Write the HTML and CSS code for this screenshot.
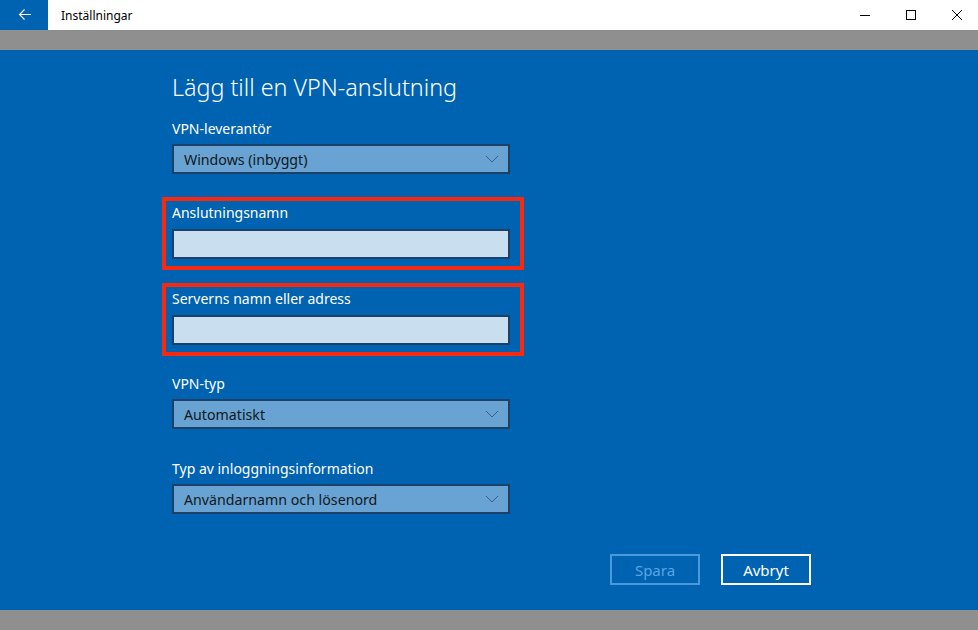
FILE: index.html
```html
<!DOCTYPE html>
<html>
<head>
  <meta charset="UTF-8">
  <title>Inställningar</title>
  <link rel="stylesheet" href="styles.css">
</head>
<body>
  <div class="titlebar">
    <div class="back">
      <svg width="48" height="30" viewBox="0 0 48 30">
        <path d="M31 14.5H19.5M24.5 9.5L19.5 14.5L24.5 19.5" fill="none" stroke="#fff" stroke-width="1.1"/>
      </svg>
    </div>
    <div class="app-title">Inställningar</div>
    <div class="controls">
      <div class="ctl">
        <svg width="12" height="12" viewBox="0 0 12 12"><path d="M1 6.5H11" stroke="#000" stroke-width="1"/></svg>
      </div>
      <div class="ctl">
        <svg width="12" height="12" viewBox="0 0 12 12"><rect x="1.5" y="1.5" width="9" height="9" fill="none" stroke="#000" stroke-width="1"/></svg>
      </div>
      <div class="ctl">
        <svg width="12" height="12" viewBox="0 0 12 12"><path d="M1 1L11 11M11 1L1 11" stroke="#000" stroke-width="1"/></svg>
      </div>
    </div>
  </div>

  <div class="band"></div>

  <div class="main">
    <div class="form">
      <h1>Lägg till en VPN-anslutning</h1>

      <div class="field">
        <label>VPN-leverantör</label>
        <div class="select">
          <span>Windows (inbyggt)</span>
          <svg width="14" height="8" viewBox="0 0 14 8"><path d="M1 1L7 7L13 1" fill="none" stroke="#3d5e80" stroke-width="1"/></svg>
        </div>
      </div>

      <div class="highlight first">
        <label>Anslutningsnamn</label>
        <div class="input"></div>
      </div>

      <div class="highlight second">
        <label>Serverns namn eller adress</label>
        <div class="input"></div>
      </div>

      <div class="field type">
        <label>VPN-typ</label>
        <div class="select">
          <span>Automatiskt</span>
          <svg width="14" height="8" viewBox="0 0 14 8"><path d="M1 1L7 7L13 1" fill="none" stroke="#3d5e80" stroke-width="1"/></svg>
        </div>
      </div>

      <div class="field login">
        <label>Typ av inloggningsinformation</label>
        <div class="select">
          <span>Användarnamn och lösenord</span>
          <svg width="14" height="8" viewBox="0 0 14 8"><path d="M1 1L7 7L13 1" fill="none" stroke="#3d5e80" stroke-width="1"/></svg>
        </div>
      </div>

      <div class="actions">
        <button class="btn disabled">Spara</button>
        <button class="btn">Avbryt</button>
      </div>
    </div>
  </div>

  <div class="band bottom"></div>
</body>
</html>
```

FILE: styles.css
```css
body {
  margin: 0;
  width: 978px;
  height: 630px;
  overflow: hidden;
  font-family: "Noto Sans", "Open Sans", sans-serif;
  background-color: #0063b1;
}
.titlebar {
  height: 30px;
  display: flex;
  align-items: center;
  background-color: #ffffff;
}
.back {
  width: 48px;
  height: 30px;
  background-color: #0063b1;
}
.back svg {
  display: block;
}
.app-title {
  margin-left: 13px;
  font-size: 12px;
  color: #000;
  flex: 1;
}
.controls {
  display: flex;
  margin-right: -2px;
}
.ctl {
  width: 46px;
  height: 30px;
  display: flex;
  align-items: center;
  justify-content: center;
}
.ctl svg {
  display: block;
}
.band {
  height: 20px;
  background-color: #8f8f8f;
}
.main {
  height: 560px;
  background-color: #0063b1;
  padding: 21px 0 0 172px;
  box-sizing: border-box;
}
.form {
  width: 639px;
  color: #ffffff;
}
h1 {
  margin: 0 0 16px;
  font-size: 23.3px;
  line-height: 32px;
  font-weight: 300;
}
label {
  display: block;
  font-size: 14px;
  line-height: 20px;
}
.field {
  width: 338px;
}
.field label {
  margin-bottom: 5px;
}
.select {
  height: 30px;
  box-sizing: border-box;
  border: 2px solid #1d4068;
  background-color: #68a3d4;
  display: flex;
  align-items: center;
  justify-content: space-between;
  padding: 0 9px 0 10px;
  color: #101820;
  font-size: 14.2px;
}
.select svg {
  display: block;
}
.highlight {
  width: 338px;
  margin-left: -10px;
  padding: 2px 10px 7px 6px;
  border: 4px solid #f8290f;
}
.highlight.first {
  margin-top: 23px;
}
.highlight.second {
  margin-top: 13px;
}
.highlight label {
  margin-bottom: 6px;
}
.input {
  height: 30px;
  box-sizing: border-box;
  border: 2px solid #1d4068;
  background-color: #c9dff0;
}
.field.type {
  margin-top: 18px;
}
.field.login {
  margin-top: 30px;
}
.actions {
  display: flex;
  justify-content: flex-end;
  gap: 21px;
  margin-top: 40px;
}
.btn {
  width: 90px;
  height: 31px;
  border: 2px solid #ffffff;
  background: transparent;
  color: #ffffff;
  font-family: "Noto Sans", "Open Sans", sans-serif;
  font-size: 15px;
  padding: 0;
}
.btn.disabled {
  border-color: #4c98dc;
  color: #5ba4e4;
}
```
